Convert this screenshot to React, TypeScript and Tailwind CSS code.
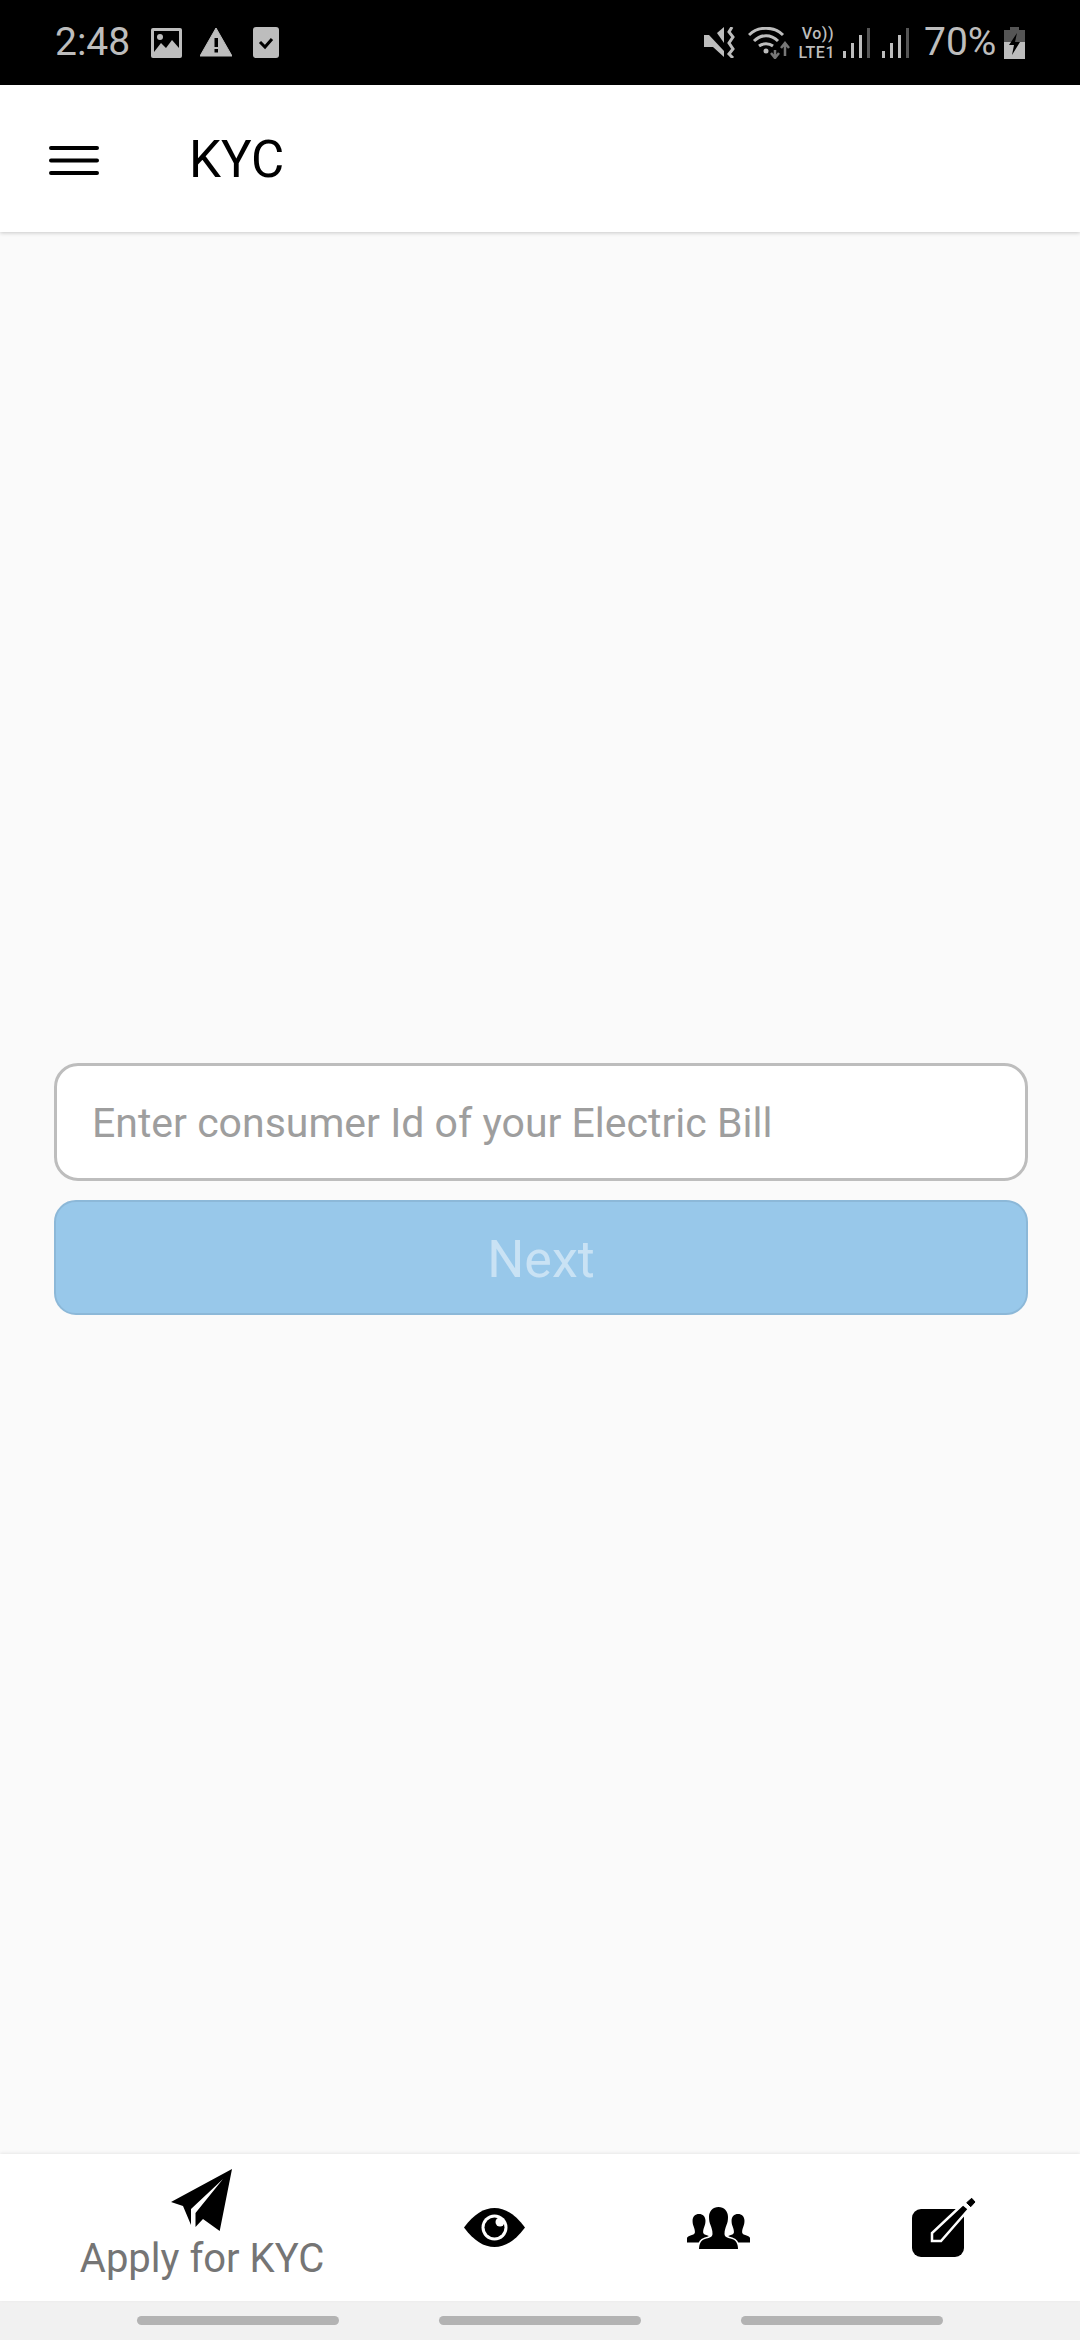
import React from 'react';

const PERSON =
  'M31.5 0C37 0 41 4 41 10C41 13 40.5 16 39.5 18C38.5 21 37.5 23 37.5 27C37.5 30 41 31 45 32C49 33 51 37 51 42L12 42C12 37 14 33 18 32C22 31 25.5 30 25.5 27C25.5 23 24.5 21 23.5 18C22.5 16 22 13 22 10C22 4 26 0 31.5 0Z';

const Signal: React.FC = () => (
  <svg width="28" height="30" viewBox="0 0 28 30">
    <rect x="0" y="23" width="3" height="7" fill="#bdbdbd" />
    <rect x="8" y="15" width="3" height="15" fill="#bdbdbd" />
    <rect x="16" y="7" width="3" height="23" fill="#bdbdbd" />
    <rect x="24" y="0" width="3" height="30" fill="#555555" />
  </svg>
);

const StatusBar: React.FC = () => (
  <div className="h-[85px] shrink-0 bg-black flex items-center justify-between pl-[55px] pr-[55px] text-[#bdbdbd] text-[39px] leading-none">
    <div className="flex items-center">
      <span className="w-[96px]">2:48</span>
      <svg width="31" height="30" viewBox="0 0 31 30">
        <rect width="31" height="30" rx="2" fill="#bdbdbd" />
        <rect x="3" y="3" width="25" height="24" fill="#000" />
        <circle cx="9" cy="9" r="3" fill="#bdbdbd" />
        <path d="M3 24L10 15L15 20L21 12L28 20V27H3Z" fill="#bdbdbd" />
      </svg>
      <svg className="ml-[18px]" width="32" height="29" viewBox="0 0 32 29">
        <path d="M16 0L32 28H0Z" fill="#bdbdbd" stroke="#bdbdbd" strokeLinejoin="round" />
        <rect x="14.5" y="10" width="3.5" height="9" fill="#000" />
        <rect x="14.5" y="21" width="3.5" height="3.5" fill="#000" />
      </svg>
      <svg className="ml-[21px]" width="26" height="31" viewBox="0 0 26 31">
        <rect width="26" height="31" rx="3" fill="#bdbdbd" />
        <path d="M7 15L12 20L19 12" fill="none" stroke="#000" strokeWidth="3" />
      </svg>
    </div>
    <div className="flex items-center">
      <svg width="31" height="31" viewBox="0 0 31 31">
        <path d="M0 8H5L20 24V30L9 20H0Z" fill="#bdbdbd" />
        <path d="M13 6L20 0V16Z" fill="#bdbdbd" />
        <path d="M28 0L25 5L29 10L25 16L29 22L25 27L29 31" fill="none" stroke="#bdbdbd" strokeWidth="3" />
      </svg>
      <svg className="ml-[13px]" width="42" height="32" viewBox="0 0 42 32">
        <path d="M1 8C10 -1 26 -1 35 8M6 14C13 7 23 7 30 14M11 19C15 16 21 16 25 19" fill="none" stroke="#bdbdbd" strokeWidth="3" />
        <circle cx="18" cy="24" r="2.5" fill="#bdbdbd" />
        <path d="M27 31V23M23 26L27 31L31 26" fill="none" stroke="#777" strokeWidth="2.5" />
        <path d="M37 29V17M33 21L37 16L41 21" fill="none" stroke="#777" strokeWidth="2.5" />
      </svg>
      <div className="ml-[5px] w-[40px] flex flex-col items-end font-medium text-[16px] leading-[19px] tracking-[0.5px]">
        <span className="pr-[1px]">Vo))</span>
        <span>LTE1</span>
      </div>
      <div className="ml-[8px] flex gap-[11px]">
        <Signal />
        <Signal />
      </div>
      <span className="ml-[14px] w-[80px]">70%</span>
      <svg width="21" height="32" viewBox="0 0 21 32">
        <path d="M6 0H15V3H21V15H0V3H6Z" fill="#555555" />
        <path d="M0 15H21V32H0Z" fill="#bdbdbd" />
        <path d="M13 6L5 18H10L8 28L16 15H11Z" fill="#000" />
      </svg>
    </div>
  </div>
);

const Header: React.FC = () => (
  <div className="h-[147px] shrink-0 bg-white flex items-center pl-[49px] shadow-[0_1px_4px_rgba(0,0,0,0.2)] z-10">
    <svg className="mt-[3px]" width="50" height="31" viewBox="0 0 50 31">
      <path d="M2 3H48M2 15.5H48M2 28H48" stroke="#000" strokeWidth="4" strokeLinecap="round" />
    </svg>
    <span className="ml-[90px] pt-[2px] text-[51px] leading-none text-black">KYC</span>
  </div>
);

const TabBar: React.FC = () => (
  <div className="h-[147px] shrink-0 bg-white flex pl-[22px] pr-[26px] shadow-[0_-1px_3px_rgba(0,0,0,0.08)] z-10">
    <div className="w-[360px] flex flex-col items-center pt-[15px]">
      <svg width="62" height="62" viewBox="0 0 62 62">
        <path d="M61 0L0 33L12 37L20 56V40L52 10L24.5 44V58L32 50L48.7 62Z" fill="#000" />
      </svg>
      <span className="mt-[4px] text-[40px] leading-[48px] text-[#757575]">Apply for KYC</span>
    </div>
    <div className="w-[224px] flex items-center justify-center">
      <svg width="61" height="39" viewBox="0 0 61 39">
        <path d="M0 19.5C10 6 20 0 30.5 0C41 0 51 6 61 19.5C51 33 41 39 30.5 39C20 39 10 33 0 19.5Z" fill="#000" />
        <circle cx="30.5" cy="19.5" r="13" fill="#fff" />
        <circle cx="30.5" cy="19.5" r="10" fill="#000" />
        <circle cx="36" cy="14" r="4.5" fill="#fff" />
      </svg>
    </div>
    <div className="w-[224px] flex items-center justify-center">
      <svg width="63" height="42" viewBox="0 0 63 42">
        <path d={PERSON} fill="#000" transform="translate(-9.4 7) scale(0.68)" />
        <path d={PERSON} fill="#000" transform="translate(29.6 7) scale(0.68)" />
        <path d={PERSON} fill="#000" stroke="#fff" strokeWidth="3" paintOrder="stroke" />
      </svg>
    </div>
    <div className="w-[224px] flex items-center justify-center pl-[5px]">
      <svg width="65" height="62" viewBox="0 -4 65 62">
        <rect x="0" y="8" width="52" height="48" rx="9" fill="#000" />
        <path d="M20 32V40H29L57 8L51 3Z" fill="#000" stroke="#fff" strokeWidth="2.5" />
        <path d="M54.7 1.7L59.7 -2.7L63 1L58.7 5.7Z" fill="#000" stroke="#000" strokeLinejoin="round" />
      </svg>
    </div>
  </div>
);

const NavHints: React.FC = () => (
  <div className="h-[39px] shrink-0 bg-[#f1f1f1] pt-[15px] pl-[137px] flex gap-[100px]">
    <div className="w-[202px] h-[9px] rounded-full bg-[#b3b3b3]" />
    <div className="w-[202px] h-[9px] rounded-full bg-[#b3b3b3]" />
    <div className="w-[202px] h-[9px] rounded-full bg-[#b3b3b3]" />
  </div>
);

export default function App() {
  return (
    <div className="h-[2340px] w-[1080px] flex flex-col bg-[#fafafa] overflow-hidden font-['Roboto',sans-serif]">
      <StatusBar />
      <Header />
      <div className="flex-1 flex flex-col justify-center pl-[54px] pr-[52px] pb-[8px] gap-[19px]">
        <input
          type="text"
          placeholder="Enter consumer Id of your Electric Bill"
          className="h-[118px] w-full bg-white border-[3px] border-[#bdbdbd] rounded-[24px] pl-[35px] pr-4 pt-[2px] text-[41px] outline-none placeholder:text-[#9e9e9e]"
        />
        <button
          disabled
          className="h-[115px] w-full bg-[#98c8ea] border-2 border-[#8cb8d8] rounded-[22px] pt-[4px] text-[52px] text-[#c9e2f4]"
        >
          Next
        </button>
      </div>
      <TabBar />
      <NavHints />
    </div>
  );
}
